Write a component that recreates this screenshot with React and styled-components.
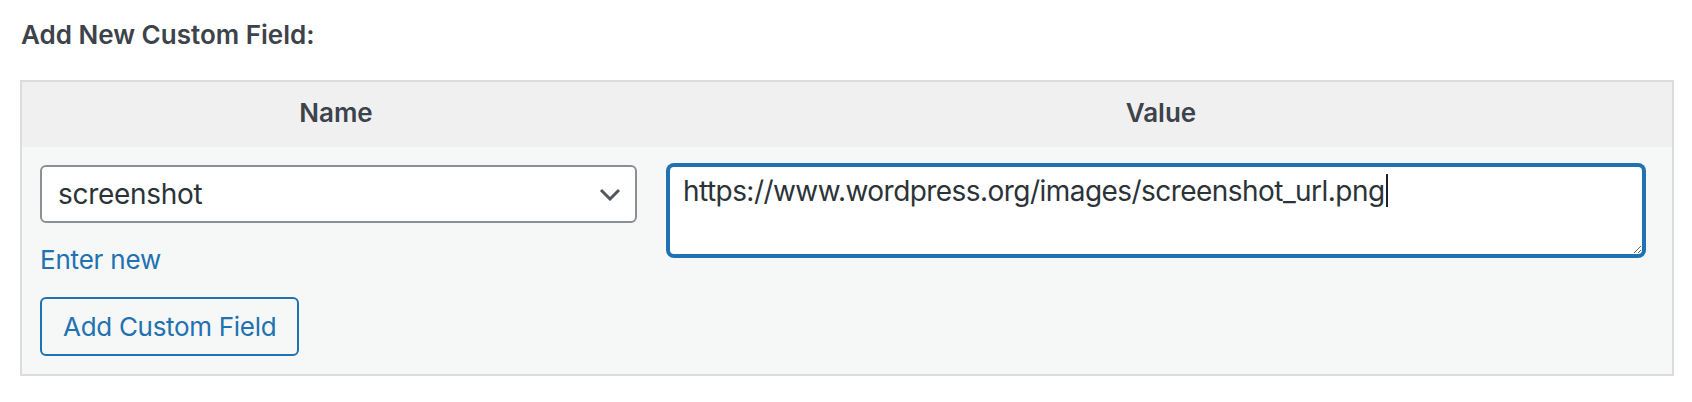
import React from "react";
import styled, { createGlobalStyle } from "styled-components";

const GlobalStyle = createGlobalStyle`
  body {
    margin: 0;
    background: #ffffff;
    font-family: Inter, "Noto Sans", sans-serif;
  }
`;

const Page = styled.div`
  padding: 17px 18px 0 20px;
`;

const Heading = styled.h3`
  margin: 0 0 27px 1px;
  font-size: 26px;
  line-height: 36px;
  font-weight: 600;
  color: #3c434a;
`;

const Table = styled.div`
  display: grid;
  grid-template-columns: 628px 1fr;
  border: 2px solid #dcdcde;
  background: #f6f7f7;
`;

const HeadCell = styled.div`
  background: #f0f0f1;
  padding: 13px 16px 16px;
  text-align: center;
  font-size: 26px;
  line-height: 36px;
  font-weight: 600;
  color: #3c434a;
`;

const Cell = styled.div`
  display: flex;
  flex-direction: column;
  align-items: flex-start;
  padding: 18px ${p => p.$right}px 18px 18px;
`;

const SelectWrap = styled.div`
  position: relative;
  width: 597px;
`;

const Select = styled.select`
  appearance: none;
  width: 100%;
  height: 58px;
  margin: 0;
  padding: 0 48px 0 16px;
  border: 2px solid #8c8f94;
  border-radius: 6px;
  background: #ffffff;
  font-family: inherit;
  font-size: 28px;
  letter-spacing: -0.3px;
  color: #2c3338;
`;

const Chevron = styled.svg`
  position: absolute;
  right: 16px;
  top: 23px;
  pointer-events: none;
`;

const EnterLink = styled.a`
  margin-top: 19px;
  font-size: 26px;
  line-height: 36px;
  letter-spacing: -0.2px;
  color: #2271b1;
  text-decoration: none;
`;

const Button = styled.button`
  margin-top: 19px;
  height: 59px;
  padding: 0 21px;
  border: 2px solid #2271b1;
  border-radius: 6px;
  background: #f6f7f7;
  font-family: inherit;
  font-size: 26px;
  letter-spacing: -0.3px;
  color: #2271b1;
  cursor: pointer;
`;

const FieldWrap = styled.div`
  position: relative;
  width: 976px;
  height: 91px;
`;

const fieldBox = `
  box-sizing: border-box;
  width: 100%;
  height: 100%;
  margin: 0;
  padding: 4px 13px;
  border: 2px solid transparent;
  border-radius: 6px;
  font-family: Inter, "Noto Sans", sans-serif;
  font-size: 28px;
  letter-spacing: -0.55px;
  line-height: 40px;
`;

const TextArea = styled.textarea`
  ${fieldBox}
  display: block;
  border-color: #2271b1;
  box-shadow: 0 0 0 2px #2271b1;
  outline: none;
  background: #ffffff;
  color: #2c3338;
  resize: both;
`;

const CaretLayer = styled.div`
  ${fieldBox}
  position: absolute;
  inset: 0;
  color: transparent;
  pointer-events: none;
  white-space: pre;
`;

const Caret = styled.span`
  display: inline-block;
  width: 2px;
  height: 33px;
  margin-top: 3px;
  margin-left: 1px;
  vertical-align: top;
  background: #1d2327;
`;

const VALUE = "https://www.wordpress.org/images/screenshot_url.png";

export default function App() {
  return (
    <>
      <GlobalStyle />
      <Page>
        <Heading>Add New Custom Field:</Heading>
        <Table>
          <HeadCell>Name</HeadCell>
          <HeadCell>Value</HeadCell>
          <Cell $right={13}>
            <SelectWrap>
              <Select defaultValue="screenshot">
                <option value="screenshot">screenshot</option>
              </Select>
              <Chevron width="22" height="13" viewBox="0 0 22 13">
                <path d="M2 2 L11 11 L20 2" fill="none" stroke="#50575e" strokeWidth="3" />
              </Chevron>
            </SelectWrap>
            <EnterLink href="#">Enter new</EnterLink>
            <Button>Add Custom Field</Button>
          </Cell>
          <Cell $right={28}>
            <FieldWrap>
              <TextArea defaultValue={VALUE} />
              <CaretLayer>
                {VALUE}
                <Caret />
              </CaretLayer>
            </FieldWrap>
          </Cell>
        </Table>
      </Page>
    </>
  );
}
